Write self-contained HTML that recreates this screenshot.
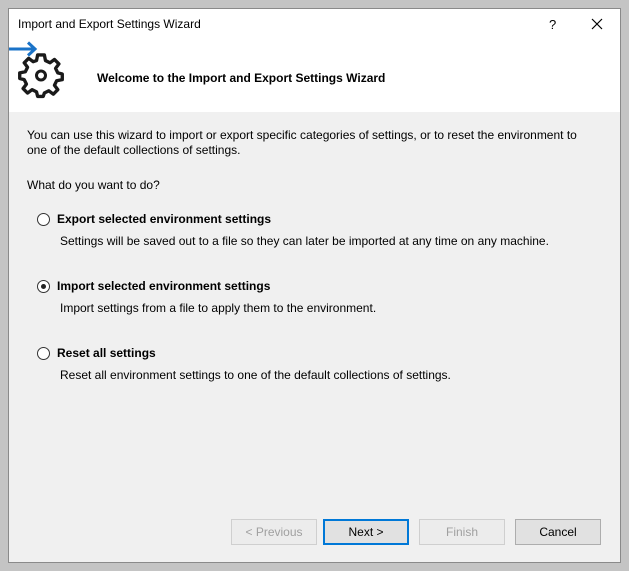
<!DOCTYPE html>
<html><head><style>
body{margin:0;width:629px;height:571px;background:#c4c4c4;font-family:"Liberation Sans",sans-serif;font-size:12px;color:#000;position:relative;overflow:hidden}
.win{position:absolute;left:8px;top:8px;width:611px;height:553px;background:#f0f0f0;border:1px solid #8a8a8a}
.hdr{position:absolute;left:0;top:0;width:611px;height:103px;background:#fff}
.t{position:absolute;white-space:nowrap}
.b{font-weight:bold}
.rad{position:absolute;width:11px;height:11px;border:1px solid #333;border-radius:50%;background:#fff}
.rad.on::after{content:"";position:absolute;left:3px;top:3px;width:5px;height:5px;border-radius:50%;background:#222}
.btn{position:absolute;top:510px;width:86px;height:26px;border:1px solid #adadad;background:#e1e1e1;text-align:center;line-height:24px;box-sizing:border-box}
.dis{color:#a0a0a0;border-color:#cfcfcf;background:#ececec}
</style></head><body>
<div class="win">
<div class="hdr"></div>
<div class="t" style="left:9px;top:8px">Import and Export Settings Wizard</div>
<div class="t" style="left:540px;top:8px;font-size:13px">?</div>
<svg style="position:absolute;left:582px;top:9px" width="12" height="12"><path d="M1 1L11 11M11 1L1 11" stroke="#000" stroke-width="1.2"/></svg>
<svg style="position:absolute;left:0;top:30px" width="64" height="64">
<path d="M0 10H26M19 3.5L26 10L19 16.5" stroke="#1a73c8" stroke-width="3" fill="none"/>
<g transform="translate(32,35)" fill="none" stroke="#1a1a1a" stroke-width="3" stroke-linejoin="round">
<path d="M-3 -17H3L4 -12L8 -10L12 -13L16 -9L13 -5L15 -1L19 0V5L14 6L12 10L15 14L11 18L7 15L3 17L2 20H-3L-4 16L-8 14L-12 17L-16 13L-13 9L-15 5L-19 4V-1L-14 -2L-12 -6L-15 -10L-11 -14L-7 -11L-4 -12Z" transform="scale(1.12)"/>
<circle cx="0" cy="1.5" r="4.5"/>
</g></svg>
<div class="t b" style="left:88px;top:62px">Welcome to the Import and Export Settings Wizard</div>
<div class="t" style="left:18px;top:119px;line-height:15px">You can use this wizard to import or export specific categories of settings, or to reset the environment to<br>one of the default collections of settings.</div>
<div class="t" style="left:18px;top:169px">What do you want to do?</div>
<div class="rad" style="left:28px;top:204px"></div>
<div class="t b" style="left:48px;top:203px">Export selected environment settings</div>
<div class="t" style="left:51px;top:225px">Settings will be saved out to a file so they can later be imported at any time on any machine.</div>
<div class="rad on" style="left:28px;top:271px"></div>
<div class="t b" style="left:48px;top:270px">Import selected environment settings</div>
<div class="t" style="left:51px;top:292px">Import settings from a file to apply them to the environment.</div>
<div class="rad" style="left:28px;top:338px"></div>
<div class="t b" style="left:48px;top:337px">Reset all settings</div>
<div class="t" style="left:51px;top:359px">Reset all environment settings to one of the default collections of settings.</div>
<div class="btn dis" style="left:222px">&lt; Previous</div>
<div class="btn" style="left:314px;border:2px solid #0078d7;line-height:22px">Next &gt;</div>
<div class="btn dis" style="left:410px">Finish</div>
<div class="btn" style="left:506px">Cancel</div>
</div>
</body></html>
